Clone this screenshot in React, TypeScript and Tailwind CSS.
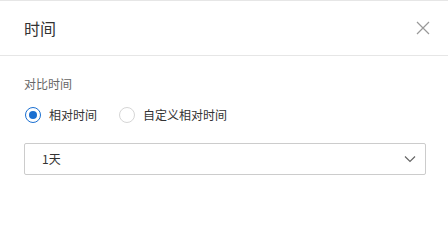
import { useState } from "react";

const font = { fontFamily: '"Noto Sans CJK SC", "Noto Sans", sans-serif' };

function Radio({ checked, label, onClick }: { checked: boolean; label: string; onClick: () => void }) {
  return (
    <button type="button" onClick={onClick} className="flex items-center gap-2">
      <span
        className={
          checked
            ? "flex h-4 w-4 items-center justify-center rounded-full border border-[#1a6fd1] bg-white"
            : "flex h-4 w-4 items-center justify-center rounded-full border border-[#d6d6d6] bg-white"
        }
      >
        {checked && <span className="h-2 w-2 rounded-full bg-[#1a6fd1]" />}
      </span>
      <span className="text-[12px] leading-[18px] text-[#333]">{label}</span>
    </button>
  );
}

export default function App() {
  const [mode, setMode] = useState("relative");
  return (
    <div style={font} className="h-[243px] w-[448px] border-t border-[#e6e6e6] bg-white">
      <div className="flex h-[55px] items-center justify-between border-b border-[#e6e6e6] pl-6 pr-[18px]">
        <span className="text-[16px] leading-6 text-[#333]">时间</span>
        <svg width="14" height="14" viewBox="0 0 14 14" className="text-[#999]">
          <path d="M1 1L13 13M13 1L1 13" stroke="currentColor" strokeWidth="1.2" />
        </svg>
      </div>
      <div className="px-6 pt-[19px]">
        <div className="text-[12px] leading-[18px] text-[#666]">对比时间</div>
        <div className="mt-[13px] flex items-center gap-[22px] pl-[1px]">
          <Radio checked={mode === "relative"} label="相对时间" onClick={() => setMode("relative")} />
          <Radio checked={mode === "custom"} label="自定义相对时间" onClick={() => setMode("custom")} />
        </div>
        <div className="mt-[19px] flex h-8 w-[402px] items-center justify-between rounded-[2px] border border-[#cccccc] pl-[17px] pr-[9px]">
          <span className="text-[12px] text-[#333]">1天</span>
          <svg width="12" height="8" viewBox="0 0 12 8" className="text-[#666]">
            <path d="M1 1.5L6 6.5L11 1.5" fill="none" stroke="currentColor" strokeWidth="1.2" />
          </svg>
        </div>
      </div>
    </div>
  );
}
